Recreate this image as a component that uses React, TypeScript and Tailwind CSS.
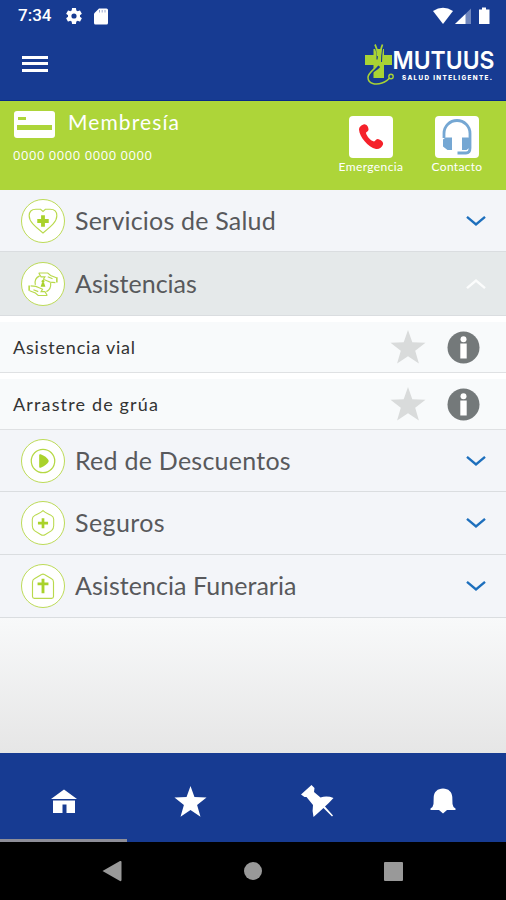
import React from 'react';

const HeartIcon: React.FC = () => (
  <svg width="44" height="44" viewBox="0 0 44 44" fill="none" stroke="#b9d94c" strokeWidth="1.200">
    <path d="M22 34.500C13 27.500 7.500 22.500 7.500 16.500C7.500 12 10.500 9.700 14.500 9.700H19.500L22 12L24.500 9.700H29.500C33.500 9.700 36.500 12 36.500 16.500C36.500 22.500 31 27.500 22 34.500Z" />
    <path d="M22 16v12M16 22h12" stroke="#a9d22b" strokeWidth="4" />
  </svg>
);

const HandsIcon: React.FC = () => (
  <svg width="44" height="44" viewBox="0 0 44 44" fill="none" stroke="#b9d94c" strokeWidth="1.200">
    <path d="M14 23C13 18.500 15 15 18.500 13.500M30 21C30.500 25 28.500 28.500 25.500 30" />
    <path d="M17.500 10.500H27L30 13L36 15.500M35 20.500L29.500 20L26 18.500L22.500 17L24 14.500H20L17.500 10.500M27 14.500L32 16.500" />
    <path d="M26.500 34H17L14 31.500L8 29M9 24L14.500 24.500L18 26L21.500 27.500L20 30H24L26.500 34M17 30L12 28" />
    <path d="M7.500 23.500v5.500M36.500 15v5.500" strokeWidth="1.700" />
    <circle cx="22" cy="19.300" r="1.500" fill="#a9d22b" stroke="none" />
    <path d="M19.500 25l1.500-4.500h2l1.500 4.500z" fill="#a9d22b" stroke="none" />
  </svg>
);

const PlayIcon: React.FC = () => (
  <svg width="44" height="44" viewBox="0 0 44 44" fill="none">
    <circle cx="22" cy="22" r="12.300" stroke="#b5d843" strokeWidth="1.300" />
    <path d="M18 16Q18 14.500 19.500 15C23.500 16.300 26.500 19 27.700 21Q28.200 22 27.700 23C26.500 25 23.500 27.700 19.500 29Q18 29.500 18 28Z" fill="#a9d22b" />
  </svg>
);

const ShieldIcon: React.FC = () => (
  <svg width="44" height="44" viewBox="0 0 44 44" fill="none" stroke="#b9d94c" strokeWidth="1.100">
    <path d="M22 9C24 11.200 27.500 12.500 30.500 14Q33.200 15.500 33.200 18V25Q33.200 28 31 30L24.500 34Q22 35.700 19.500 34L13 30Q10.800 28 10.800 25V18Q10.800 15.500 13.500 14C16.500 12.500 20 11.200 22 9Z" />
    <path d="M22 17v10.500M16.700 22.200h10.600" stroke="#a9d22b" strokeWidth="2.800" />
  </svg>
);

const ChapelIcon: React.FC = () => (
  <svg width="44" height="44" viewBox="0 0 44 44" fill="none" stroke="#b9d94c" strokeWidth="1.200">
    <path d="M13 35Q11 35 11 33V18Q11 15.500 13 14.500L20.500 10Q22 9 23.500 10L31 14.500Q33 15.500 33 18V33Q33 35 31 35Z" />
    <path d="M22 14.500v15M16.300 19.800h11.400" stroke="#a9d22b" strokeWidth="3" />
  </svg>
);

const Chevron: React.FC<{ up?: boolean }> = ({ up }) => (
  <svg width="20" height="12" viewBox="0 0 20 12" fill="none" strokeWidth="2.400" className={up ? 'rotate-180' : ''}>
    <path d="M1 1.800L10 9.400L19 1.800" stroke={up ? '#fbfcfc' : '#1d6fbd'} />
  </svg>
);

const Star: React.FC<{ size: number; color: string }> = ({ size, color }) => (
  <svg width={size} height={size} viewBox="0 0 36 34" fill={color}>
    <path d="M18 0L22.300 12.200L35.500 12.700L25.200 20.800L28.900 33.500L18 26.300L7.100 33.500L10.800 20.800L0.500 12.700L13.700 12.200Z" />
  </svg>
);

const Logo: React.FC = () => (
  <svg width="134" height="46" viewBox="0 0 134 46">
    <path d="M9.500 5h10.500v6h8v10h-8v13H9.500V21H1V11h8.500z" fill="#a9d334" />
    <path d="M11.500 4Q14 10 13 15.500M18.500 5Q17.500 11 17.500 18" stroke="#173b92" strokeWidth="1.100" fill="none" />
    <path d="M11 0.500Q13.500 5 13.800 12M18.500 0.500Q16 6 16 14" stroke="#a9d334" strokeWidth="1.700" fill="none" />
    <path d="M15 22C12 26 4 28 4 33.500C4 40 12 41 18 39C23 37.500 25 36 27.500 34.500" stroke="#173b92" strokeWidth="3" fill="none" />
    <path d="M16 17C14 24 4 27.500 4 33.500C4 40 12 41 18 39C23 37.500 25 35 27 32.500" stroke="#a9d334" strokeWidth="1.500" fill="none" />
    <circle cx="27" cy="32.500" r="2.200" fill="#173b92" stroke="#a9d334" strokeWidth="1.400" />
    <text x="28.500" y="25.200" fill="#fff" fontSize="24" fontWeight="600" textLength="102" lengthAdjust="spacingAndGlyphs" className="font-['Inter',sans-serif]">MUTUUS</text>
    <text x="38" y="35.600" fill="#fff" fontSize="6.300" fontWeight="800" textLength="90" className="font-['Inter',sans-serif]">SALUD INTELIGENTE.</text>
  </svg>
);

type Category = { label: string; icon: React.ReactNode; row: string; text: string; open?: boolean };

const categories: Category[] = [
  { label: 'Servicios de Salud', icon: <HeartIcon />, row: 'h-[62px] bg-[#f3f5f9]', text: 'tracking-[0.2px]' },
  { label: 'Asistencias', icon: <HandsIcon />, row: 'h-16 bg-[#e5e9ea]', text: 'tracking-[0px]', open: true },
  { label: 'Red de Descuentos', icon: <PlayIcon />, row: 'h-[62px] bg-[#f3f5f9]', text: 'tracking-[0.25px]' },
  { label: 'Seguros', icon: <ShieldIcon />, row: 'h-[63px] bg-[#f3f5f9]', text: 'tracking-[0.4px]' },
  { label: 'Asistencia Funeraria', icon: <ChapelIcon />, row: 'h-[63px] bg-[#f3f5f9]', text: 'tracking-[0.05px]' },
];

const services = [
  { name: 'Asistencia vial', text: 'tracking-[0.8px]' },
  { name: 'Arrastre de grúa', text: 'tracking-[1.15px]' },
];

const CategoryRow: React.FC<{ item: Category }> = ({ item }) => (
  <div className={`flex items-center border-b border-[#dadde0] pl-[21px] pr-5 ${item.row}`}>
    <div className="flex h-[44px] w-[44px] shrink-0 items-center justify-center rounded-full border border-[#bddb58] bg-white">
      {item.icon}
    </div>
    <span className={`ml-[10px] grow whitespace-nowrap text-[25px] text-[#58595c] ${item.text}`}>{item.label}</span>
    <Chevron up={item.open} />
  </div>
);

const App: React.FC = () => {
  return (
    <div className="flex h-[900px] w-[506px] flex-col overflow-hidden bg-white font-['Lato',sans-serif]">
      <header className="h-[101px] shrink-0 border-b border-[#08288a] bg-[#173b92] text-white">
        {/* Status bar */}
        <div className="flex h-8 items-center pl-[18px] pr-[15px]">
          <span className="w-[45px] font-['Roboto',sans-serif] text-[17px] font-medium">7:34</span>
          <svg width="20" height="20" viewBox="0 0 24 24" fill="#fff" className="ml-px">
            <path d="M19.140 12.940c.04-.3.06-.61.06-.94 0-.32-.02-.64-.07-.94l2.030-1.580c.18-.14.23-.41.12-.61l-1.920-3.320c-.12-.22-.37-.29-.59-.22l-2.390.96c-.5-.38-1.030-.7-1.620-.94L14.400 2.810c-.04-.24-.24-.41-.48-.41h-3.840c-.24 0-.43.17-.47.41l-.36 2.540c-.59.24-1.130.57-1.620.94l-2.390-.96c-.22-.08-.47 0-.59.22L2.740 8.870c-.12.21-.08.47.12.61l2.030 1.580c-.05.3-.09.63-.09.94s.02.64.07.94l-2.030 1.580c-.18.14-.23.41-.12.61l1.920 3.320c.12.22.37.29.59.22l2.390-.96c.5.38 1.030.7 1.620.94l.36 2.540c.05.24.24.41.48.41h3.840c.24 0 .44-.17.47-.41l.36-2.540c.59-.24 1.130-.56 1.620-.94l2.390.96c.22.08.47 0 .59-.22l1.920-3.320c.12-.22.07-.47-.12-.61l-2.010-1.580zM12 15.100A3.100 3.100 0 1 1 12 8.900a3.100 3.100 0 0 1 0 6.200z" />
          </svg>
          <svg width="14" height="17" viewBox="0 0 14 17" className="ml-[10px]">
            <path d="M5 0.500H12.500Q14 0.500 14 2V15Q14 16.500 12.500 16.500H1.500Q0 16.500 0 15V5.500Z" fill="#fff" />
            <path d="M5.500 2v2.500M8.200 2v2.500M11 2v2.500" stroke="#9aa9d0" strokeWidth="1" />
          </svg>
          <svg width="58" height="18" viewBox="0 0 58 18" className="ml-auto">
            <path d="M0 4Q10 -2.500 20 4L10 17Z" fill="#fff" />
            <path d="M38 1.500V17H22Z" fill="#6f86bd" />
            <path d="M32.500 7V17H22Z" fill="#fff" />
            <path d="M49 0.500h4v2h3.500v14.500h-10.500V2.500h3z" fill="#fff" />
          </svg>
        </div>
        <div className="flex items-center justify-between pl-[22px] pr-[8px]">
          <div className="mt-[5px] flex w-[26px] flex-col gap-[3.5px]">
            <span className="h-[3px] bg-white" />
            <span className="h-[3px] bg-white" />
            <span className="h-[3px] bg-white" />
          </div>
          <div className="mt-3">
            <Logo />
          </div>
        </div>
      </header>

      {/* Membership */}
      <section className="flex h-[89px] shrink-0 justify-between bg-[#add539] text-white">
        <div className="pl-[13px] pt-2">
          <div className="flex items-center">
            <svg width="42" height="30" viewBox="0 0 42 30">
              <rect x="1" y="2" width="41" height="27" rx="3" fill="#fff" />
              <path d="M5 9.500h8" stroke="#add539" strokeWidth="3" />
              <path d="M4 18.500h35" stroke="#add539" strokeWidth="5" />
            </svg>
            <span className="ml-[13px] whitespace-nowrap pb-1 text-[21px] leading-6 tracking-[1.100px]">Membresía</span>
          </div>
          <p className="mt-[6px] whitespace-nowrap font-['Open_Sans',sans-serif] text-[13px] leading-5 tracking-[0.55px]">0000 0000 0000 0000</p>
        </div>
        <div className="flex pt-[15px] text-xs leading-[14px]">
          <div className="flex w-[86px] flex-col items-center">
            <div className="flex h-[42px] w-[44px] items-center justify-center rounded bg-white">
              <svg width="28" height="28" viewBox="0 0 28 28">
                <path d="M6.500 1.500C9 0.500 12 4 11.500 7C11 8.500 9 9 9 10C9.500 13 14 18 17 18.500C18.500 18.500 18.500 16 20.500 16C23.500 16.500 27 19 26 21.500C25 24.500 22 26.500 19 26C11 24 2.500 14 2 6.500C2 4 4 2.500 6.500 1.500Z" fill="#f5212a" />
              </svg>
            </div>
            <span className="mt-[2px] tracking-[0.4px]">Emergencia</span>
          </div>
          <div className="mr-[6px] flex w-[86px] flex-col items-center">
            <div className="flex h-[42px] w-[44px] items-center justify-center rounded bg-white">
              <svg width="34" height="38" viewBox="0 0 34 38" fill="none" stroke="#75a7d3">
                <path d="M4 20V15.500A13 13 0 0 1 30 15.500V30Q30 35 26 35H17.500" strokeWidth="2.800" />
                <path d="M5.500 19.500H12V32H7.500L3 28.500V21.500ZM22 19.500H28.500L31 21.500V28.500L26.500 32H22Z" fill="#75a7d3" stroke="none" />
              </svg>
            </div>
            <span className="mt-[2px] tracking-[0.3px]">Contacto</span>
          </div>
        </div>
      </section>

      {/* Categories */}
      <main className="flex grow flex-col bg-gradient-to-b from-[#f8f9fa] from-76% to-[#e6e6e6]">
        {categories.map((item) => (
          <React.Fragment key={item.label}>
            <CategoryRow item={item} />
            {item.open &&
              services.map((service) => (
                <div key={service.name} className="flex h-[57px] items-center border-b border-t-[6px] border-b-[#dfe1e3] border-t-white bg-[#f8fafb] pl-[13px] pr-[26px]">
                  <span className={`grow pb-px text-lg text-[#333] ${service.text}`}>{service.name}</span>
                  <Star size={36} color="#d9dbdb" />
                  <svg width="33" height="33" viewBox="0 0 33 33" className="ml-[21px]">
                    <circle cx="16.500" cy="16.500" r="16" fill="#74797a" />
                    <circle cx="16.500" cy="8.300" r="3" fill="#fff" />
                    <path d="M13.300 12.500h6.400V27.500h-6.400z" fill="#fff" />
                  </svg>
                </div>
              ))}
          </React.Fragment>
        ))}
      </main>

      {/* Tabs */}
      <nav className="grid h-[89px] shrink-0 grid-cols-4 bg-[#173b92]">
        <div className="flex items-center justify-center border-b-[3px] border-[#8e8e98] pl-px pt-[11px]">
          <svg width="26" height="26" viewBox="0 0 26 26" fill="#fff">
            <path d="M13 0.500L26 10H0ZM2 11.500h22V24H15.500V15.500h-4V24H2z" />
          </svg>
        </div>
        <div className="flex items-center justify-center pl-px pt-[7px]">
          <Star size={33} color="#fff" />
        </div>
        <div className="flex items-center justify-center pl-px pt-[7px]">
          <svg width="34" height="34" viewBox="0 0 34 34" fill="#fff">
            <path d="M11.500 1L14.500 4L14 8L20.500 13.500Q27 11.500 33.500 14Q29 19 25 22.500L33 31.500L32 32.500L23.500 24Q18 29 13.500 33Q12 26 13 21L6.500 13L4.500 13L1 10.500Z" />
          </svg>
        </div>
        <div className="flex items-center justify-center pt-[6px]">
          <svg width="26" height="26" viewBox="0 0 26 26" fill="#fff">
            <path d="M13 0.500C18.500 0.500 22 4 22.300 9L22.500 16Q22.800 19 25.500 20.500V22H17L13 25.500L9 22H0.500V20.500Q3.200 19 3.500 16L3.700 9C4 4 7.500 0.500 13 0.500Z" />
          </svg>
        </div>
      </nav>

      {/* System navigation */}
      <footer className="flex h-[58px] shrink-0 items-center justify-between bg-black pl-[102px] pr-[103px]">
        <svg width="20" height="22" viewBox="0 0 20 22" fill="#999">
          <path d="M0.500 11L18 1Q19.500 0.500 19.500 2V20Q19.500 21.500 18 21Z" />
        </svg>
        <span className="h-[18px] w-[18px] rounded-full bg-[#999]" />
        <span className="h-[19px] w-[19px] rounded-[1px] bg-[#999]" />
      </footer>
    </div>
  );
};

export default App;
